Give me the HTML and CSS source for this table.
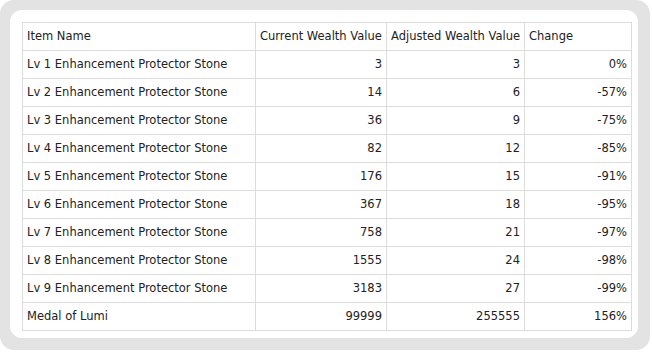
FILE: index.html
```html
<!DOCTYPE html>
<html>
<head>
<meta charset="utf-8">
<link rel="stylesheet" href="styles.css">
</head>
<body>
<div class="frame">
  <div class="panel">
    <table class="wealth">
      <colgroup>
        <col class="c-name"><col class="c-cur"><col class="c-adj"><col class="c-chg">
      </colgroup>
      <thead>
        <tr><th>Item Name</th><th>Current Wealth Value</th><th>Adjusted Wealth Value</th><th>Change</th></tr>
      </thead>
      <tbody>
        <tr><td>Lv 1 Enhancement Protector Stone</td><td class="num">3</td><td class="num">3</td><td class="num">0%</td></tr>
        <tr><td>Lv 2 Enhancement Protector Stone</td><td class="num">14</td><td class="num">6</td><td class="num">-57%</td></tr>
        <tr><td>Lv 3 Enhancement Protector Stone</td><td class="num">36</td><td class="num">9</td><td class="num">-75%</td></tr>
        <tr><td>Lv 4 Enhancement Protector Stone</td><td class="num">82</td><td class="num">12</td><td class="num">-85%</td></tr>
        <tr><td>Lv 5 Enhancement Protector Stone</td><td class="num">176</td><td class="num">15</td><td class="num">-91%</td></tr>
        <tr><td>Lv 6 Enhancement Protector Stone</td><td class="num">367</td><td class="num">18</td><td class="num">-95%</td></tr>
        <tr><td>Lv 7 Enhancement Protector Stone</td><td class="num">758</td><td class="num">21</td><td class="num">-97%</td></tr>
        <tr><td>Lv 8 Enhancement Protector Stone</td><td class="num">1555</td><td class="num">24</td><td class="num">-98%</td></tr>
        <tr><td>Lv 9 Enhancement Protector Stone</td><td class="num">3183</td><td class="num">27</td><td class="num">-99%</td></tr>
        <tr><td>Medal of Lumi</td><td class="num">99999</td><td class="num">255555</td><td class="num">156%</td></tr>
      </tbody>
    </table>
  </div>
</div>
</body>
</html>
```
FILE: styles.css
```css
html, body {
  margin: 0;
  padding: 0;
  background: #ffffff;
}
.frame {
  width: 650px;
  height: 350px;
  box-sizing: border-box;
  background: #e3e3e3;
  border-radius: 14px;
  padding: 10px 12px 12px 10px;
}
.panel {
  height: 100%;
  box-sizing: border-box;
  background: #ffffff;
  border-radius: 12px;
  padding: 12px 8px 8px 12px;
}
.wealth {
  border-collapse: collapse;
  table-layout: fixed;
  width: 609px;
  font-family: "DejaVu Sans", sans-serif;
  font-size: 11.5px;
  color: #222222;
}
.c-name { width: 233px; }
.c-cur { width: 131px; }
.c-adj { width: 138px; }
.c-chg { width: 107px; }
.wealth tr {
  height: 28px;
}
.wealth th,
.wealth td {
  border: 1px solid #dcdcdc;
  padding: 0 4px 2px 4px;
  font-weight: normal;
  text-align: left;
  white-space: nowrap;
}
.wealth td.num {
  text-align: right;
}
```
